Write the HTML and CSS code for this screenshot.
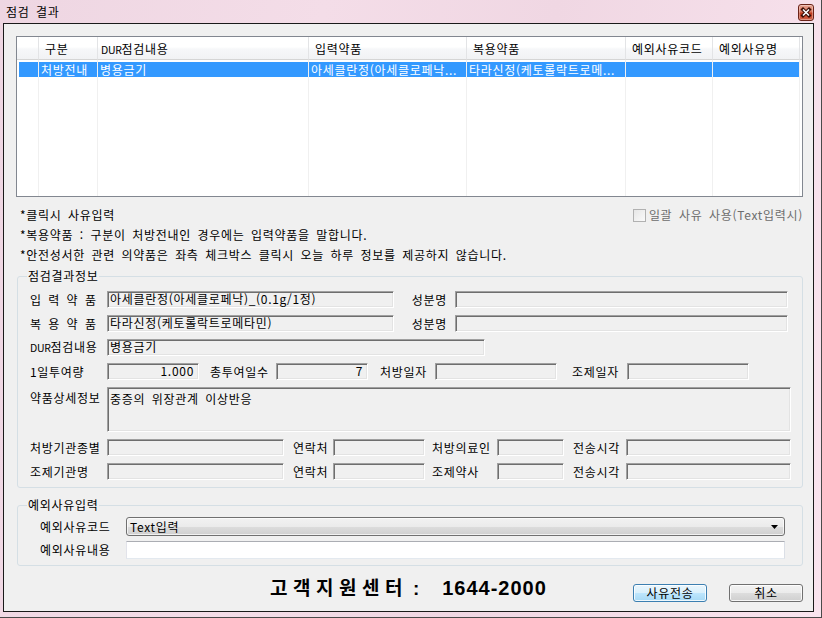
FILE: index.html
```html
<!DOCTYPE html>
<html lang="ko">

<head>
    <meta charset="UTF-8">
    <meta name="viewport" content="width=device-width, initial-scale=1.0">
    <title>점검 결과</title>
    <link rel="stylesheet" href="styles.css">
</head>

<body>
    <div class="window">
        <div class="titlebar">
            <span class="title">점검 결과</span>
            <span class="close">
                <svg width="14" height="15" viewBox="0 0 14 15">
                    <path d="M4 4.5 L10 10.5 M10 4.5 L4 10.5" stroke="#3a0c04" stroke-width="3.6" stroke-linecap="square" fill="none" />
                    <path d="M4 4.5 L10 10.5 M10 4.5 L4 10.5" stroke="#fff" stroke-width="1.6" fill="none" />
                </svg>
            </span>
        </div>

        <div class="client">
            <!-- 점검 결과 목록 -->
            <div class="listview">
                <table>
                    <colgroup>
                        <col class="c0">
                        <col class="c1">
                        <col class="c2">
                        <col class="c3">
                        <col class="c4">
                        <col class="c5">
                        <col class="c6">
                        <col>
                    </colgroup>
                    <tr class="head">
                        <th></th>
                        <th>구분</th>
                        <th class="th-dur"><span class="abbr">DUR</span>점검내용</th>
                        <th>입력약품</th>
                        <th>복용약품</th>
                        <th>예외사유코드</th>
                        <th>예외사유명</th>
                        <th></th>
                    </tr>
                    <tr class="gap">
                        <td></td><td></td><td></td><td></td><td></td><td></td><td></td><td></td>
                    </tr>
                    <tr class="sel">
                        <td class="first"></td>
                        <td>처방전내</td>
                        <td>병용금기</td>
                        <td>아세클란정(아세클로페낙...</td>
                        <td>타라신정(케토롤락트로메...</td>
                        <td></td>
                        <td></td>
                        <td class="blank"></td>
                    </tr>
                    <tr class="fill">
                        <td></td><td></td><td></td><td></td><td></td><td></td><td></td><td></td>
                    </tr>
                </table>
            </div>

            <div class="notes">
                <div class="note-top">
                    <span>*클릭시 사유입력</span>
                    <span class="chk"><span class="chk-box"></span>일괄 사유 사용(Text입력시)</span>
                </div>
                <div>*복용약품 : 구분이 처방전내인 경우에는 입력약품을 말합니다.</div>
                <div>*안전성서한 관련 의약품은 좌측 체크박스 클릭시 오늘 하루 정보를 제공하지 않습니다.</div>
            </div>

            <!-- 점검결과정보 -->
            <fieldset class="group info">
                <legend>점검결과정보</legend>
                <div class="frow">
                    <span class="lbl lbl-main">입 력 약 품</span>
                    <span class="fld w287">아세클란정(아세클로페낙)_(0.1g/1정)</span>
                    <span class="lbl lbl-comp">성분명</span>
                    <span class="fld w333"></span>
                </div>
                <div class="frow">
                    <span class="lbl lbl-main">복 용 약 품</span>
                    <span class="fld w287">타라신정(케토롤락트로메타민)</span>
                    <span class="lbl lbl-comp">성분명</span>
                    <span class="fld w333"></span>
                </div>
                <div class="frow">
                    <span class="lbl lbl-main"><span class="abbr">DUR</span>점검내용</span>
                    <span class="fld w378">병용금기</span>
                </div>
                <div class="frow">
                    <span class="lbl lbl-main">1일투여량</span>
                    <span class="fld w92 num">1.000</span>
                    <span class="lbl lbl-days">총투여일수</span>
                    <span class="fld w92 num">7</span>
                    <span class="lbl lbl-date1">처방일자</span>
                    <span class="fld w122"></span>
                    <span class="lbl lbl-date2">조제일자</span>
                    <span class="fld w122"></span>
                </div>
                <div class="frow tall">
                    <span class="lbl lbl-main">약품상세정보</span>
                    <span class="fld w684 memo">중증의 위장관계 이상반응</span>
                </div>
                <div class="frow">
                    <span class="lbl lbl-main">처방기관종별</span>
                    <span class="fld w177"></span>
                    <span class="lbl lbl-tel">연락처</span>
                    <span class="fld w92"></span>
                    <span class="lbl lbl-person">처방의료인</span>
                    <span class="fld w67"></span>
                    <span class="lbl lbl-time">전송시각</span>
                    <span class="fld w165"></span>
                </div>
                <div class="frow">
                    <span class="lbl lbl-main">조제기관명</span>
                    <span class="fld w177"></span>
                    <span class="lbl lbl-tel">연락처</span>
                    <span class="fld w92"></span>
                    <span class="lbl lbl-person">조제약사</span>
                    <span class="fld w67"></span>
                    <span class="lbl lbl-time">전송시각</span>
                    <span class="fld w165"></span>
                </div>
            </fieldset>

            <!-- 예외사유입력 -->
            <fieldset class="group reason">
                <legend>예외사유입력</legend>
                <div class="rrow">
                    <span class="lbl lbl-reason">예외사유코드</span>
                    <div class="combo">
                        <span>Text입력</span>
                        <svg width="7" height="4" viewBox="0 0 7 4">
                            <polygon points="0,0 7,0 3.5,4" fill="#000" />
                        </svg>
                    </div>
                </div>
                <div class="rrow">
                    <span class="lbl lbl-reason">예외사유내용</span>
                    <div class="textbox"></div>
                </div>
            </fieldset>

            <div class="footer">
                <div class="support">
                    <span class="support-label">고객지원센터</span><span class="support-sep">:</span><span class="support-num">1644-2000</span>
                </div>
                <button class="btn btn-default">사유전송</button>
                <button class="btn btn-cancel">취소</button>
            </div>
        </div>
    </div>
</body>

</html>
```

FILE: styles.css
```css
* {
    box-sizing: border-box;
}

body {
    margin: 0;
    font: 12px/1 "Noto Sans CJK KR", "Noto Sans", sans-serif;
    letter-spacing: 0.7px;
    word-spacing: 2.5px;
    color: #000;
}

.abbr {
    font-size: 10.5px;
    letter-spacing: -0.3px;
}

.window {
    width: 822px;
    height: 618px;
    display: flex;
    flex-direction: column;
    padding: 0 7px 5px 3px;
    border-right: 1px solid #4a4a4a;
    border-bottom: 1px solid #4a4a4a;
    background: linear-gradient(100deg, #eed6e2 0%, #f4dde8 35%, #f0d7e3 60%, #f9e4ee 100%);
    overflow: hidden;
}

.titlebar {
    height: 23px;
    flex: none;
    display: flex;
    justify-content: space-between;
    align-items: flex-start;
}

.title {
    padding: 6px 0 0 3px;
    line-height: 12px;
}

.close {
    width: 16px;
    height: 17px;
    margin-top: 4px;
    display: flex;
    align-items: center;
    justify-content: center;
    border: 1px solid #6b2318;
    border-radius: 3px;
    background: linear-gradient(#e8a493 0%, #d7745c 45%, #c2391c 55%, #d0644a 100%);
    box-shadow: inset 0 0 0 1px rgba(255, 255, 255, 0.35);
}

.client {
    flex: 1;
    display: flex;
    flex-direction: column;
    border: 1px solid #1a1a1a;
    background: #f0f0f0;
    padding: 0 10px 0 12px;
}

/* list */
.listview {
    margin-top: 12px;
    height: 161px;
    flex: none;
    border: 1px solid #828790;
    background: #fff;
    overflow: hidden;
}

.listview table {
    width: 785px;
    border-spacing: 0;
    table-layout: fixed;
}

.c0 { width: 22px; }
.c1 { width: 59px; }
.c2 { width: 211px; }
.c3 { width: 158px; }
.c4 { width: 159px; }
.c5 { width: 87px; }
.c6 { width: 87px; }

.listview th {
    height: 23px;
    padding: 2px 0 0 6px;
    text-align: left;
    font-weight: normal;
    white-space: nowrap;
    overflow: hidden;
    border-right: 1px solid #e3e4e6;
    border-bottom: 1px solid #d5d5d5;
    background: linear-gradient(#ffffff 0%, #ffffff 45%, #f6f7f9 55%, #f1f2f4 100%);
}

.listview th.th-dur {
    padding-left: 3px;
}

.listview td {
    padding: 0 0 0 2px;
    border-right: 1px solid #f0f0f0;
    white-space: nowrap;
    overflow: hidden;
}

.listview .gap td {
    height: 2px;
}

.listview .sel td {
    height: 15px;
    line-height: 15px;
    color: #fff;
    background: #3399ff;
}

.listview .sel td.first {
    box-shadow: inset 2px 0 #fff;
}

.listview .sel td.blank {
    background: #fff;
}

.listview .fill td {
    height: 119px;
}

.listview th:last-child,
.listview td:last-child {
    border-right: none;
}

/* notes */
.notes {
    margin-top: 7px;
    padding-left: 4px;
    line-height: 20px;
}

.note-top {
    display: flex;
    justify-content: space-between;
    align-items: center;
}

.chk {
    display: flex;
    align-items: center;
    color: #6d6d6d;
    padding-top: 1px;
}

.chk-box {
    width: 13px;
    height: 13px;
    margin-right: 3px;
    border: 1px solid #b1b1b1;
    background: linear-gradient(135deg, #e6e6e6, #fafafa);
}

/* group boxes */
.group {
    margin: 4px 0 0 1px;
    padding: 8px 0 7px 0;
    border: 1px solid #d5dfe5;
    border-radius: 3px;
    min-width: 0;
}

.group legend {
    margin-left: 9px;
    padding: 0 1px;
    line-height: 14px;
}

.group.reason {
    margin-top: 10px;
    padding: 5px 0 6px 0;
}

.frow {
    height: 17px;
    display: flex;
    align-items: center;
    padding-left: 12px;
}

.frow + .frow {
    margin-top: 7px;
}

.frow.tall {
    height: 45px;
    align-items: flex-start;
}

.lbl {
    flex: none;
    white-space: nowrap;
}

.lbl-main { width: 77px; }
.lbl-comp { width: 61px; text-align: right; padding-right: 8px; }
.lbl-days { width: 77px; padding-left: 11px; }
.lbl-date1 { width: 67px; padding-left: 12px; }
.lbl-date2 { width: 70px; padding-left: 15px; }
.lbl-tel { width: 49px; padding-left: 9px; }
.lbl-person { width: 72px; padding-left: 7px; }
.lbl-time { width: 62px; padding-left: 9px; }
.lbl-reason { width: 86px; }

.frow.tall .lbl {
    padding-top: 5px;
}

.fld {
    flex: none;
    height: 17px;
    padding: 0 2px;
    line-height: 13px;
    white-space: nowrap;
    overflow: hidden;
    border: 1px solid;
    border-color: #a0a0a0 #fff #fff #a0a0a0;
    box-shadow: inset 1px 1px #6e6e6e, inset -1px -1px #e3e3e3;
}

.fld.num {
    text-align: right;
    padding-right: 4px;
}

.fld.memo {
    height: 45px;
    padding-top: 4px;
}

.w67 { width: 67px; }
.w92 { width: 92px; }
.w122 { width: 122px; }
.w165 { width: 165px; }
.w177 { width: 177px; }
.w287 { width: 287px; }
.w333 { width: 333px; }
.w378 { width: 378px; }
.w684 { width: 684px; }

.rrow {
    display: flex;
    align-items: center;
    padding-left: 22px;
}

.rrow + .rrow {
    margin-top: 5px;
}

.combo {
    width: 659px;
    height: 19px;
    display: flex;
    justify-content: space-between;
    align-items: center;
    padding: 0 6px 0 3px;
    border: 1px solid #707070;
    border-radius: 3px;
    background: linear-gradient(#f2f2f2 0%, #ebebeb 50%, #dddddd 50%, #cfcfcf 100%);
    box-shadow: inset 0 0 0 1px rgba(255, 255, 255, 0.7);
}

.textbox {
    width: 659px;
    height: 18px;
    background: #fff;
    border: 1px solid;
    border-color: #abadb3 #dbdfe6 #e3e9ef #e2e3ea;
}

/* footer */
.footer {
    display: flex;
    align-items: flex-start;
    padding: 10px 0 0 254px;
}

.support {
    line-height: 24px;
    font-family: "Liberation Sans", "Noto Sans CJK KR", sans-serif;
    font-weight: bold;
    font-size: 19px;
    letter-spacing: 0;
    word-spacing: 0;
}

.support-label {
    letter-spacing: 5.5px;
}

.support-sep {
    margin: 0 23px 0 5px;
}

.support-num {
    font-size: 20px;
    letter-spacing: 1px;
}

.btn {
    width: 74px;
    height: 18px;
    margin-top: 8px;
    padding: 0;
    font: 12px/14px "Noto Sans CJK KR", sans-serif;
    letter-spacing: 0.7px;
    color: #000;
    border: 1px solid #707070;
    border-radius: 3px;
    background: linear-gradient(#f2f2f2 0%, #ebebeb 50%, #dddddd 50%, #cfcfcf 100%);
    box-shadow: inset 0 0 0 1px rgba(255, 255, 255, 0.8);
}

.btn-default {
    margin-left: auto;
    border-color: #3c7fb1;
    background: linear-gradient(#eaf6fd 0%, #d9f0fc 50%, #bee6fd 50%, #a7d9f5 100%);
}

.btn-cancel {
    margin-left: 22px;
}
```
